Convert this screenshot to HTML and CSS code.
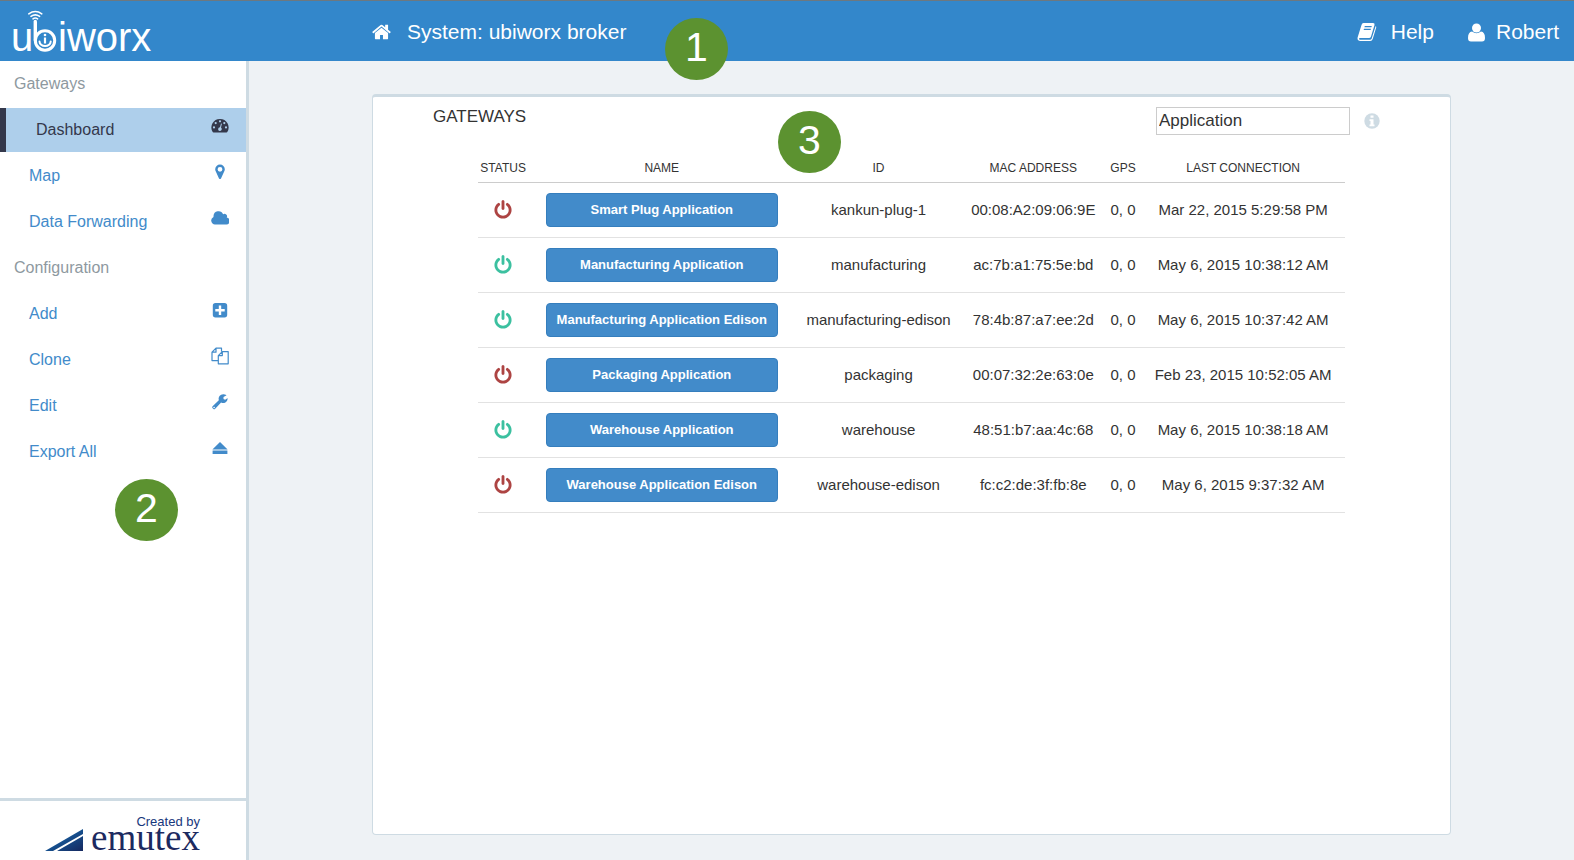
FILE: index.html
```html
<!DOCTYPE html>
<html lang="en">
<head>
<meta charset="utf-8">
<title>ubiworx</title>
<link rel="stylesheet" href="styles.css">
</head>
<body>
<svg class="defs" aria-hidden="true">
  <symbol id="power" viewBox="0 0 1536 1792"><path d="M1536 896q0 156-61 298t-164 245-245 164-298 61-298-61-245-164T61 1194 0 896q0-182 80.500-343T307 283q43-32 95.500-25t83.500 50q32 42 24.500 94.500T461 487q-98 74-151.500 181T256 896q0 104 40.500 198.500T406 1258t163.500 109.500T768 1408t198.500-40.500T1130 1258t109.500-163.500T1280 896q0-121-53.500-228T1075 487q-42-32-49.500-84.500T1050 308q31-43 84-50t95 25q146 109 226.500 270T1536 896zM896 128v640q0 52-38 90t-90 38-90-38-38-90V128q0-52 38-90t90-38 90 38 38 90z"/></symbol>
</svg>
<header class="topbar">
  <a class="logo" href="#" aria-label="ubiworx">
    <svg width="160" height="58" viewBox="0 0 160 58" fill="#fff">
      <text class="wordmark" x="11" y="50">u</text>
      <text class="wordmark" x="58" y="50">iworx</text>
      <g fill="none" stroke="#fff" stroke-linecap="round">
        <path stroke-width="3.400" d="M35.300 20.500V39"/>
        <circle stroke-width="3" cx="45" cy="39.500" r="9.700"/>
        <path stroke-width="2" d="M39.500 40.500a5.600 4.600 0 0 0 11.200 0"/>
        <path stroke-width="2.200" stroke-linecap="butt" d="M45 36.500v6"/>
        <path stroke-width="1.600" d="M28.800 12.800q6.500-4.600 13 0M31 15.400q4.300-3 8.600 0M33 17.800q2.300-1.600 4.600 0"/>
      </g>
      <circle cx="45" cy="34" r="1.300"/>
    </svg>
  </a>
  <a class="crumb" href="#">
    <svg width="19" height="18" viewBox="0 0 1664 1536" fill="#fff"><path d="M1408 864v480q0 26-19 45t-45 19H960v-384H704v384H320q-26 0-45-19t-19-45V864l575-474 577 474zm223-69l-62 74q-8 9-21 11-14 2-24-7L832 296 140 873q-12 8-24 7-13-2-21-11l-62-74q-8-10-7-23.500T37 750l719-599q32-26 76-26t76 26l244 204V160q0-14 9-23t23-9h192q14 0 23 9t9 23v408l219 182q10 8 11 21.500t-7 23.500z"/></svg>
    System: ubiworx broker
  </a>
  <nav class="usernav">
    <a href="#"><svg width="20" height="20" viewBox="0 0 20 20"><path fill="#fff" fill-rule="evenodd" d="M6.500 1H16q2 0 1.500 2L14 14.500Q13.500 16 12 16H3q-1 0-1 .8T3 17.700h10q1.200 0 1.600-1L18.700 4q.8.500.5 1.500L15.700 17q-.6 2-2.500 2H3Q0 18.500.6 15.500L4.500 3Q5 1 6.500 1zM7.800 4l-.4 1.300h7L14.800 4zM7 6.700L6.600 8h7L14 6.700z"/></svg>Help</a>
    <a href="#"><svg width="17" height="19" viewBox="0 0 17 19" fill="#fff"><circle cx="8.500" cy="5" r="4.500"/><path d="M4 8.500q4.500 3.500 9 0 4 .5 4 6.500 0 3.500-3 3.500H3q-3 0-3-3.500 0-6 4-6.500z"/></svg>Robert</a>
  </nav>
  <span class="marker marker-1">1</span>
</header>
<div class="layout">
  <aside class="sidebar">
    <nav class="menu">
      <h2>Gateways</h2>
      <a class="active" href="#">Dashboard<svg viewBox="0 0 18 18"><path fill="currentColor" fill-rule="evenodd" d="M9 2a8.500 8.500 0 0 0-7.300 13q.2.400.8.400h13q.6 0 .8-.4A8.500 8.500 0 0 0 9 2zM9 3.200a1.100 1.100 0 1 1 0 2.200 1.100 1.100 0 0 1 0-2.200zM4.700 5a1.100 1.100 0 1 1 0 2.200 1.100 1.100 0 0 1 0-2.200zm8.600 0a1.100 1.100 0 1 1 0 2.200 1.100 1.100 0 0 1 0-2.200zM3 9.300a1.100 1.100 0 1 1 0 2.200 1.100 1.100 0 0 1 0-2.200zm12 0a1.100 1.100 0 1 1 0 2.200 1.100 1.100 0 0 1 0-2.200zM10 6.500l.9.200-.9 3.900q1 .8.700 1.900a1.800 1.800 0 1 1-1.700-2.200z"/></svg></a>
      <a href="#">Map<svg viewBox="0 0 18 18"><path fill="currentColor" fill-rule="evenodd" d="M9 1.500a4.800 4.800 0 0 1 4.800 4.800q0 1-.4 1.800L10 15.400q-1 1.300-2 0L4.600 8.100q-.4-.8-.4-1.800A4.800 4.800 0 0 1 9 1.500zm0 2.400a2.400 2.400 0 1 0 0 4.800 2.400 2.400 0 0 0 0-4.800z"/></svg></a>
      <a href="#">Data Forwarding<svg viewBox="0 0 18 18"><path fill="currentColor" d="M4 15.500a4 4 0 0 1-1.500-7.600V7a5 5 0 0 1 9.600-1.700 2.500 2.500 0 0 1 3.600 3.300A3.500 3.500 0 0 1 14.500 15.500z"/></svg></a>
      <h2>Configuration</h2>
      <a href="#">Add<svg viewBox="0 0 18 18"><path fill="currentColor" fill-rule="evenodd" d="M4.500 2h9Q16.200 2 16.200 4.700v9q0 2.700-2.700 2.700h-9q-2.700 0-2.700-2.700v-9Q1.800 2 4.500 2zm3.300 2.600V8H4.300v2.400h3.500v3.500h2.400v-3.500h3.500V8h-3.500V4.600z"/></svg></a>
      <a href="#">Clone<svg viewBox="0 0 18 18" fill="none" stroke="currentColor" stroke-width="1.200" stroke-linejoin="round"><path d="M7 13.600H1V5.200L5 1.200h5.500v3.200M5 1.200v4H1M7.300 8.600l4-4h5.900v12.200H7.300zM11.300 4.600v4h-4"/></svg></a>
      <a href="#">Edit<svg viewBox="0 0 18 18"><path fill="currentColor" fill-rule="evenodd" d="M16 5.500q.8-.4.700.3a4.600 4.600 0 0 1-6.600 3.800l-5.900 6.200q-1 1-2 0l-.6-.6q-1-1 0-2l6.200-5.900A4.600 4.600 0 0 1 12.400 1.200q1.600 0 2.800.7.500.3 0 .7L12.500 4.100v1.800l1.600.9zM3.100 13.700a.8.800 0 1 0 0 1.600.8.800 0 0 0 0-1.600z"/></svg></a>
      <a href="#">Export All<svg viewBox="0 0 18 18"><path fill="currentColor" d="M9 3L16.600 10.500H1.400zM1.600 11.500h14.800v3.500H1.600z"/></svg></a>
    </nav>
    <span class="marker marker-2">2</span>
    <footer class="credit">
      <svg width="156" height="42" viewBox="0 0 156 42" role="img" aria-label="Created by emutex">
        <defs><linearGradient id="sail" x1="0" y1="0" x2="1" y2="1"><stop offset="0" stop-color="#1577bd"/><stop offset="1" stop-color="#16285f"/></linearGradient></defs>
        <path fill="url(#sail)" d="M0 36L38 14v5L8 36zM12 36l26-15v15z"/>
        <text class="by" x="155" y="11">Created by</text>
        <text class="maker" x="155" y="35">emutex</text>
      </svg>
    </footer>
  </aside>
  <main class="content">
    <section class="panel">
      <div class="panel-head">
        <h1>GATEWAYS</h1>
        <input type="text" value="Application" aria-label="Filter gateways">
        <svg width="16" height="16" viewBox="0 0 16 16"><circle cx="8" cy="8" r="7.700" fill="#cedbe3"/><path fill="#fff" d="M6.500 2.500h3v2.300h-3zM5.500 6.200h4v5.300h1v1.800h-5v-1.800h1V8h-1z"/></svg>
      </div>
      <table>
        <colgroup><col class="c-status"><col class="c-name"><col class="c-id"><col class="c-mac"><col class="c-gps"><col class="c-last"></colgroup>
        <thead><tr><th>STATUS</th><th>NAME</th><th>ID</th><th>MAC ADDRESS</th><th>GPS</th><th>LAST CONNECTION</th></tr></thead>
        <tbody>
          <tr><td><svg class="power off"><use href="#power"/></svg></td><td><button>Smart Plug Application</button></td><td>kankun-plug-1</td><td>00:08:A2:09:06:9E</td><td>0, 0</td><td>Mar 22, 2015 5:29:58 PM</td></tr>
          <tr><td><svg class="power on"><use href="#power"/></svg></td><td><button>Manufacturing Application</button></td><td>manufacturing</td><td>ac:7b:a1:75:5e:bd</td><td>0, 0</td><td>May 6, 2015 10:38:12 AM</td></tr>
          <tr><td><svg class="power on"><use href="#power"/></svg></td><td><button>Manufacturing Application Edison</button></td><td>manufacturing-edison</td><td>78:4b:87:a7:ee:2d</td><td>0, 0</td><td>May 6, 2015 10:37:42 AM</td></tr>
          <tr><td><svg class="power off"><use href="#power"/></svg></td><td><button>Packaging Application</button></td><td>packaging</td><td>00:07:32:2e:63:0e</td><td>0, 0</td><td>Feb 23, 2015 10:52:05 AM</td></tr>
          <tr><td><svg class="power on"><use href="#power"/></svg></td><td><button>Warehouse Application</button></td><td>warehouse</td><td>48:51:b7:aa:4c:68</td><td>0, 0</td><td>May 6, 2015 10:38:18 AM</td></tr>
          <tr><td><svg class="power off"><use href="#power"/></svg></td><td><button>Warehouse Application Edison</button></td><td>warehouse-edison</td><td>fc:c2:de:3f:fb:8e</td><td>0, 0</td><td>May 6, 2015 9:37:32 AM</td></tr>
        </tbody>
      </table>
      <span class="marker marker-3">3</span>
    </section>
  </main>
</div>
</body>
</html>
```
FILE: styles.css
```css
* { box-sizing: border-box; }
body {
  margin: 0;
  min-height: 100vh;
  display: flex;
  flex-direction: column;
  background: #eef2f5;
  color: #333;
  font-family: "Liberation Sans", Arial, sans-serif;
  font-size: 15px;
}
a { text-decoration: none; }
h1, h2 { margin: 0; font-weight: normal; }
.defs { position: absolute; width: 0; height: 0; }

.topbar {
  position: relative;
  display: flex;
  height: 61px;
  border-top: 1px solid #6d7880;
  background: #3387cb;
}
.topbar a { color: #fff; }
.logo { width: 372px; }
.logo svg { display: block; }
.wordmark { font-size: 40px; }
.crumb, .usernav, .usernav a { display: flex; align-items: center; font-size: 21px; }
.crumb, .usernav { padding-top: 2px; }
.crumb { gap: 16px; }
.usernav { margin-left: auto; gap: 34px; padding-right: 15px; }
.usernav a { gap: 14px; }
.usernav a + a { gap: 11px; }

.layout { flex: 1; display: flex; }
.sidebar {
  position: relative;
  display: flex;
  flex-direction: column;
  width: 249px;
  border-right: 3px solid #cedbe3;
  background: #fff;
}
.menu { display: grid; gap: 2px; padding-top: 1px; font-size: 16px; }
.menu h2 { padding-left: 14px; color: #8e999f; font-size: 16px; line-height: 44px; }
.menu a {
  display: flex;
  justify-content: space-between;
  padding: 0 17px 0 29px;
  color: #428bca;
  line-height: 44px;
}
.menu a svg { width: 18px; height: 18px; margin-top: 9px; }
.menu .active {
  padding-left: 30px;
  border-left: 6px solid #34384b;
  background: #aecfeb;
  color: #34384b;
}
.credit {
  display: flex;
  justify-content: center;
  margin-top: auto;
  padding: 14px 0 3px;
  border-top: 3px solid #cedbe3;
}
.by { fill: #17377c; font-size: 13px; text-anchor: end; }
.maker { fill: #1c2a60; font-family: "Liberation Serif", serif; font-size: 37px; text-anchor: end; }

.content { flex: 1; display: flex; padding: 33px 123px 25px; }
.panel {
  position: relative;
  flex: 1;
  border: 1px solid #cedbe3;
  border-top-width: 3px;
  border-radius: 4px;
  background: #fff;
}
.panel-head { display: flex; align-items: flex-start; padding: 10px 70px 0 60px; }
h1 { margin-right: auto; font-size: 17px; line-height: 20px; }
.panel-head input {
  width: 194px;
  height: 28px;
  padding: 0 2px;
  border: 1px solid #ccc;
  color: #333;
  font: 17px "Liberation Sans", Arial, sans-serif;
}
.panel-head svg { margin: 6px 0 0 14px; }

table { width: calc(100% - 210px); margin: 17px auto 0; border-collapse: collapse; table-layout: fixed; }
.c-status { width: 5.8%; }
.c-name { width: 30.8%; }
.c-id { width: 19.2%; }
.c-mac { width: 16.5%; }
.c-gps { width: 4.2%; }
.c-last { width: 23.5%; }
th, td { padding: 0; text-align: center; white-space: nowrap; }
th { height: 30px; padding-top: 2px; border-bottom: 1px solid #ccc; font-size: 12px; font-weight: normal; }
td { height: 55px; border-bottom: 1px solid #e2e2e2; }
td button {
  width: 232px;
  height: 34px;
  border: 1px solid #357ebd;
  border-radius: 4px;
  background: #428bca;
  color: #fff;
  font: bold 13px "Liberation Sans", Arial, sans-serif;
}
.power { display: block; width: 18px; height: 20px; margin: 0 auto; }
.off { fill: #ad4443; }
.on { fill: #3cc0a0; }

.marker {
  position: absolute;
  width: 63px;
  height: 62px;
  border-radius: 50%;
  background: #5c9230;
  color: #fff;
  font-size: 41px;
  line-height: 58px;
  text-align: center;
}
.marker-1 { left: 665px; top: 17px; }
.marker-2 { left: 115px; top: 418px; }
.marker-3 { left: 405px; top: 14px; }
```
